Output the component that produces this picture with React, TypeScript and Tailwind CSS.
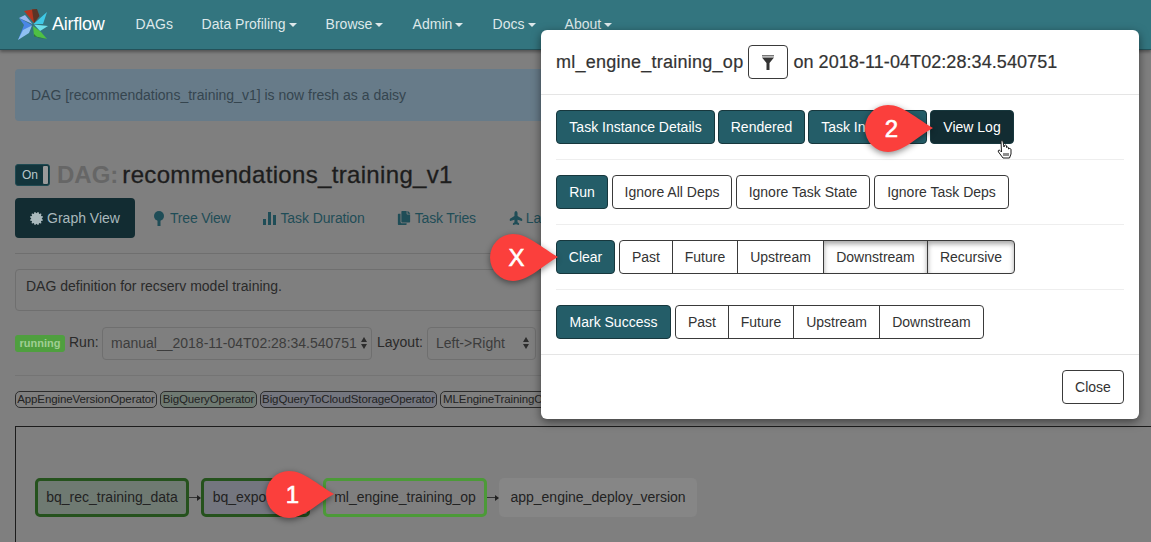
import type { ReactNode } from "react";
import { FaCertificate, FaCopy, FaPlane } from "react-icons/fa";

const navItems = [
  { label: "DAGs", caret: false, width: "w-[66px]" },
  { label: "Data Profiling", caret: true, width: "w-[124px]" },
  { label: "Browse", caret: true, width: "w-[87px]" },
  { label: "Admin", caret: true, width: "w-[80px]" },
  { label: "Docs", caret: true, width: "w-[72px]" },
  { label: "About", caret: true, width: "w-[60px]" },
];

function Logo() {
  return (
    <svg width="44" height="42" viewBox="0 0 44 42" className="shrink-0">
      <path d="M14 7 L25 5 L29 12 L24 19 Z" fill="#b5361f" />
      <path d="M22 5.5 L27 5 L29.5 12 L24 19 Z" fill="#5a3527" />
      <path d="M23.5 20 L37 8 L33 20 Z" fill="#3fc9e6" />
      <path d="M24 20.5 L38 22 L30 27 Z" fill="#6fe0ea" />
      <path d="M23 22 L24 32 L37 35 L31 28 Z" fill="#4fc043" />
      <path d="M24 30 L24 32.5 L37 35 L28 34 Z" fill="#2f7a33" />
      <path d="M22 21 L9 14 L14 21 L8 36 Z" fill="#4a86e6" />
      <path d="M22 21.5 L13 26 L8 36 L19 29 Z" fill="#8fc0f2" />
      <path d="M22.5 20 L9 14 L15 11 Z" fill="#9ab8f0" />
    </svg>
  );
}

function TreeIcon() {
  return (
    <svg width="12" height="15" viewBox="0 0 12 15" fill="currentColor">
      <circle cx="6" cy="5" r="5" />
      <rect x="4.5" y="8" width="3" height="7" />
    </svg>
  );
}

function BarsIcon() {
  return (
    <svg width="13" height="13" viewBox="0 0 13 13" fill="currentColor">
      <rect x="0" y="7" width="3" height="6" />
      <rect x="5" y="0" width="3" height="13" />
      <rect x="10" y="3" width="3" height="10" />
    </svg>
  );
}

function FilterIcon() {
  return (
    <svg width="12" height="15" viewBox="0 0 12 15" fill="#333">
      <rect x="0" y="0" width="12" height="1.5" fill="#777" />
      <path d="M0 2.5 H12 L7.5 8 V15 H4.5 V8 Z" />
    </svg>
  );
}

function HandCursor() {
  return (
    <svg width="16" height="19" viewBox="0 0 16 19" className="absolute left-[997px] top-[140px]">
      <path
        d="M4 1.5 C4 .5 6 .5 6 1.5 L7 7 L7.5 5.5 C8 4.5 9.5 5 9.5 6 L9.5 7.5 C10 6.5 11.5 7 11.5 8 L11.5 9 C12 8 14 8.5 14 9.5 L14 14 L12.5 18 L6 18 L1.5 12 C.5 10.5 2 9.5 3 10.5 L4.5 12 Z"
        fill="#fff"
        stroke="#1c1c1c"
        strokeWidth="1"
        strokeLinejoin="round"
      />
      <path d="M7 13 V16 M9 13 V16 M11 13 V16" stroke="#1c1c1c" strokeWidth="1" />
    </svg>
  );
}

function Caret() {
  return <span className="ml-[3px] inline-block border-x-[4px] border-t-[4px] border-x-transparent border-t-current align-middle" />;
}

function SelectArrows() {
  return (
    <span className="flex flex-col gap-[2px]">
      <span className="border-x-[3px] border-b-[5px] border-x-transparent border-b-[#2c2c2c]" />
      <span className="border-x-[3px] border-t-[5px] border-x-transparent border-t-[#2c2c2c]" />
    </span>
  );
}

function Callout({ label, className }: { label: string; className: string }) {
  return (
    <div className={`absolute h-[47px] w-[68px] ${className}`}>
      <svg width="68" height="47" viewBox="0 0 68 47" className="absolute inset-0 drop-shadow-[0_2px_3px_rgba(0,0,0,0.45)]">
        <path d="M23 0 C38 0 52 14 68 23 C52 32 38 47 23 47 A23 23.5 0 0 1 23 0 Z" fill="#fb3f3c" />
      </svg>
      <span className="absolute left-0 top-0 flex h-[47px] w-[53px] items-center justify-center text-[24px] text-white [-webkit-text-stroke:0.6px_white]">
        {label}
      </span>
    </div>
  );
}

function TealButton({ children, width, dark }: { children: ReactNode; width: string; dark?: boolean }) {
  return (
    <button
      className={`flex h-[34px] items-center justify-center rounded border border-[#17373d] text-[14px] text-white ${width} ${
        dark ? "bg-[#122c32]" : "bg-[#245d68]"
      }`}
    >
      {children}
    </button>
  );
}

function PlainButton({ children, width }: { children: ReactNode; width: string }) {
  return (
    <button className={`flex h-[34px] items-center justify-center rounded border border-[#3a3a3a] bg-white text-[14px] text-[#333] ${width}`}>
      {children}
    </button>
  );
}

function ButtonGroup({ items }: { items: { label: string; width: string; active?: boolean }[] }) {
  return (
    <div className="flex h-[34px] overflow-hidden rounded border border-[#3a3a3a] bg-white">
      {items.map((item, i) => (
        <span
          key={item.label}
          className={`flex items-center justify-center text-[14px] text-[#333] ${item.width} ${i > 0 ? "border-l border-[#3a3a3a]" : ""} ${
            item.active ? "shadow-[inset_0_3px_5px_rgba(0,0,0,0.35)]" : ""
          }`}
        >
          {item.label}
        </span>
      ))}
    </div>
  );
}

function Chip({ label, className }: { label: string; className: string }) {
  return (
    <span className={`flex h-[17px] items-center justify-center rounded-[5px] border border-[#2d2d2d] text-[11.5px] tracking-[-0.1px] whitespace-nowrap text-[#222] ${className}`}>
      {label}
    </span>
  );
}

function Arrow({ width }: { width: string }) {
  return (
    <span className={`flex items-center ${width}`}>
      <span className="h-px flex-1 bg-[#333]" />
      <span className="border-y-[3px] border-l-[4px] border-y-transparent border-l-[#222]" />
    </span>
  );
}

export default function App() {
  return (
    <div className="relative h-[542px] w-[1151px] overflow-hidden bg-[#7f7f7f] font-['Liberation_Sans',Arial,sans-serif]">
      {/* navbar */}
      <nav className="flex h-[50px] items-center border-b border-[#24525a] bg-[#33757f] pl-[10px] shadow-[0_2px_3px_rgba(0,0,0,0.35)]">
        <Logo />
        <span className="-ml-[2px] mr-[31px] text-[18px] tracking-[-0.2px] text-white">Airflow</span>
        {navItems.map((item) => (
          <span key={item.label} className={`text-[14px] text-[#dde8ea] ${item.width}`}>
            {item.label}
            {item.caret && <Caret />}
          </span>
        ))}
      </nav>

      <main className="px-[15px]">
        <div className="mt-[19px] flex h-[52px] items-center rounded bg-[#677b89] pl-[16px] text-[14px] text-[#35454f]">
          DAG [recommendations_training_v1] is now fresh as a daisy
        </div>

        <div className="mt-[42px] flex h-[24px] items-center">
          <span className="flex h-[22px] w-[35px] items-center justify-between rounded-[3px] border border-[#1f4a52] bg-[#13353c] pl-[6px] text-[12px] text-[#b9c6c9]">
            On
            <span className="h-[20px] w-[7px] rounded-[2px] border border-[#13353c] bg-[#9a9a9a]" />
          </span>
          <h1 className="ml-[7px] text-[24px] leading-none text-[#1d1d1d] [-webkit-text-stroke:0.3px_#1d1d1d]">
            <span className="font-bold text-[#666] [-webkit-text-stroke:0]">DAG:</span>
            <span className="ml-[4px] tracking-[0.33px]">recommendations_training_v1</span>
          </h1>
        </div>

        {/* tabs */}
        <div className="mt-[11px] flex h-[56px] items-start border-b border-[#6f6f6f] text-[14px] text-[#1f4d57]">
          <span className="flex h-[40px] w-[120px] items-center justify-center gap-[4px] rounded bg-[#122c32] text-[#a9b9bc]">
            <FaCertificate size={13} />
            Graph View
          </span>
          <span className="ml-[18px] flex h-[40px] items-center gap-[5px] tracking-[-0.2px]">
            <TreeIcon />
            Tree View
          </span>
          <span className="ml-[33px] flex h-[40px] items-center gap-[4px] tracking-[-0.1px]">
            <BarsIcon />
            Task Duration
          </span>
          <span className="ml-[32px] flex h-[40px] items-center gap-[4px] tracking-[-0.2px]">
            <FaCopy size={14} />
            Task Tries
          </span>
          <span className="ml-[33px] flex h-[40px] items-center gap-[3px]">
            <FaPlane size={14} className="-rotate-90" />
            Landing Times
          </span>
        </div>

        <div className="mt-[15px] h-[42px] rounded border border-[#6f6f6f] pl-[10px] pt-[6px] text-[14px] leading-[20px] text-[#2a2a2a]">
          DAG definition for recserv model training.
        </div>

        {/* run form */}
        <div className="mt-[16px] flex h-[33px] items-center text-[14px] text-[#2a2a2a]">
          <span className="flex h-[17px] w-[50px] items-center justify-center rounded-[3px] bg-[#4f9f3f] text-[11px] font-bold text-[#9fce93]">
            running
          </span>
          <span className="ml-[4px] mb-[3px] w-[33px]">Run:</span>
          <span className="flex h-[33px] w-[270px] items-center justify-between rounded border border-[#6f6f6f] pb-[1px] pl-[8px] pr-[4px] whitespace-nowrap text-[#3c3c3c]">
            manual__2018-11-04T02:28:34.540751
            <SelectArrows />
          </span>
          <span className="ml-[5px] mb-[3px] w-[50px]">Layout:</span>
          <span className="flex h-[33px] w-[109px] items-center justify-between rounded border border-[#6f6f6f] pb-[1px] pl-[8px] pr-[6px] text-[#3c3c3c]">
            Left-&gt;Right
            <SelectArrows />
          </span>
        </div>

        <div className="mt-[15px] h-px bg-[#747474]" />

        <div className="mt-[15px] flex gap-[3px]">
          <Chip label="AppEngineVersionOperator" className="w-[142px]" />
          <Chip label="BigQueryOperator" className="w-[97px] bg-[#6f7a72]" />
          <Chip label="BigQueryToCloudStorageOperator" className="w-[177px] bg-[#74767f]" />
          <Chip label="MLEngineTrainingOperator" className="w-[142px]" />
        </div>

        {/* graph */}
        <div className="mt-[18px] h-[200px] w-[1200px] border-l border-t border-[#1c1c1c] pl-[19px] pt-[51px] text-[14px] text-[#222]">
          <div className="flex items-center">
            <span className="flex h-[39px] w-[154px] items-center justify-center rounded-[5px] border-[3px] border-[#25521d] bg-[#6f7a72]">
              bq_rec_training_data
            </span>
            <Arrow width="w-[12px]" />
            <span className="flex h-[39px] w-[109px] items-center justify-center rounded-[5px] border-[3px] border-[#25521d] bg-[#74767f]">
              bq_export_op
            </span>
            <Arrow width="w-[13px]" />
            <span className="flex h-[39px] w-[164px] items-center justify-center rounded-[5px] border-[3px] border-[#4c9a38]">
              ml_engine_training_op
            </span>
            <Arrow width="w-[12px]" />
            <span className="flex h-[39px] w-[198px] items-center justify-center rounded-[5px] bg-[#868686]">
              app_engine_deploy_version
            </span>
          </div>
        </div>
      </main>

      {/* task instance modal */}
      <div className="absolute left-[541px] top-[30px] w-[598px] rounded-md bg-white text-[#333] shadow-[0_3px_10px_rgba(0,0,0,0.5)]">
        <div className="flex h-[65px] items-center border-b border-[#e5e5e5] px-[15px] text-[18px] [-webkit-text-stroke:0.2px_#333]">
          <span className="tracking-[0.25px]">ml_engine_training_op</span>
          <span className="mx-[5px] flex h-[34px] w-[40px] items-center justify-center rounded border border-[#3a3a3a]">
            <FilterIcon />
          </span>
          <span className="tracking-[0.07px]">on 2018-11-04T02:28:34.540751</span>
        </div>

        <div className="px-[15px] pt-[15px]">
          <div className="flex gap-[3px] pb-[15px]">
            <TealButton width="w-[159px]">Task Instance Details</TealButton>
            <TealButton width="w-[87px]">Rendered</TealButton>
            <TealButton width="w-[119px]">Task Instances</TealButton>
            <TealButton width="w-[84px]" dark>
              View Log
            </TealButton>
          </div>
          <div className="flex gap-[4px] border-t border-[#eee] py-[15px]">
            <TealButton width="w-[52px]">Run</TealButton>
            <PlainButton width="w-[120px]">Ignore All Deps</PlainButton>
            <PlainButton width="w-[134px]">Ignore Task State</PlainButton>
            <PlainButton width="w-[135px]">Ignore Task Deps</PlainButton>
          </div>
          <div className="flex gap-[4px] border-t border-[#eee] py-[15px]">
            <TealButton width="w-[59px]">Clear</TealButton>
            <ButtonGroup
              items={[
                { label: "Past", width: "w-[52px]" },
                { label: "Future", width: "w-[65px]" },
                { label: "Upstream", width: "w-[86px]" },
                { label: "Downstream", width: "w-[104px]", active: true },
                { label: "Recursive", width: "w-[87px]", active: true },
              ]}
            />
          </div>
          <div className="flex gap-[4px] border-t border-[#eee] py-[15px]">
            <TealButton width="w-[115px]">Mark Success</TealButton>
            <ButtonGroup
              items={[
                { label: "Past", width: "w-[52px]" },
                { label: "Future", width: "w-[65px]" },
                { label: "Upstream", width: "w-[86px]" },
                { label: "Downstream", width: "w-[104px]" },
              ]}
            />
          </div>
        </div>

        <div className="flex h-[65px] items-center justify-end border-t border-[#e5e5e5] px-[15px]">
          <PlainButton width="w-[62px]">Close</PlainButton>
        </div>
      </div>

      {/* annotations drawn over the screenshot */}
      <Callout label="2" className="left-[865px] top-[105px]" />
      <Callout label="X" className="left-[490px] top-[234px]" />
      <Callout label="1" className="left-[266px] top-[471px]" />
      <HandCursor />
    </div>
  );
}
